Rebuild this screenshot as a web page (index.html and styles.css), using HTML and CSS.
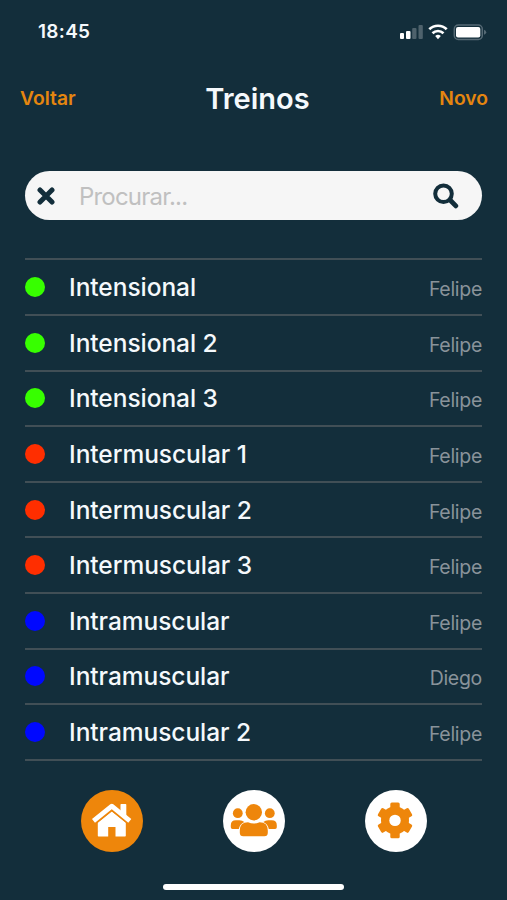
FILE: index.html
```html
<!DOCTYPE html>
<html lang="pt-BR">
<head>
    <meta charset="UTF-8">
    <meta name="viewport" content="width=device-width, initial-scale=1.0">
    <title>Treinos</title>
    <link rel="stylesheet" href="styles.css">
</head>
<body>

    <div class="status">
        <span class="time">18:45</span>
        <svg class="status-icons" width="88" height="20" viewBox="0 0 88 20">
            <g fill="#fff">
                <rect x="1" y="12" width="4" height="6" rx="1"/>
                <rect x="7" y="10" width="4.500" height="8" rx="1"/>
                <rect x="13.200" y="7" width="4.300" height="11" rx="1" opacity=".25"/>
                <rect x="19.500" y="4" width="4.300" height="14" rx="1" opacity=".25"/>
            </g>
            <g fill="none" stroke="#fff" stroke-width="2.700">
                <path d="M30.300 8.300a12.400 12.400 0 0 1 17.400 0"/>
                <path d="M33.500 12.200a8 8 0 0 1 11 0"/>
            </g>
            <path d="M36.200 15a4.200 4.200 0 0 1 5.600 0L39 18.200z" fill="#fff"/>
            <rect x="55.300" y="4" width="28" height="14.500" rx="4" fill="none" stroke="#566a75" stroke-width="1.500"/>
            <rect x="57" y="6" width="24.300" height="10.500" rx="2" fill="#fff"/>
            <path d="M85 8.700q2.200.7 2.200 2.500t-2.200 2.500z" fill="#566a75"/>
        </svg>
    </div>

    <header>
        <a href="#">Voltar</a>
        <h1>Treinos</h1>
        <a href="#">Novo</a>
    </header>

    <main>
        <form class="search">
            <svg width="18" height="18" viewBox="0 0 18 18">
                <path d="M3 3l12 12M15 3L3 15" stroke="#132e3b" stroke-width="5" stroke-linecap="round"/>
            </svg>
            <input type="text" placeholder="Procurar...">
            <svg width="26" height="26" viewBox="0 0 26 26" fill="none" stroke="#132e3b">
                <circle cx="10.500" cy="10.700" r="8.300" stroke-width="4"/>
                <path d="M17.300 17.300l5.500 5.600" stroke-width="4.800" stroke-linecap="round"/>
            </svg>
        </form>

        <ul class="list">
            <li><span class="dot green"></span><span class="name">Intensional</span><span class="owner">Felipe</span></li>
            <li><span class="dot green"></span><span class="name">Intensional 2</span><span class="owner">Felipe</span></li>
            <li><span class="dot green"></span><span class="name">Intensional 3</span><span class="owner">Felipe</span></li>
            <li><span class="dot red"></span><span class="name">Intermuscular 1</span><span class="owner">Felipe</span></li>
            <li><span class="dot red"></span><span class="name">Intermuscular 2</span><span class="owner">Felipe</span></li>
            <li><span class="dot red"></span><span class="name">Intermuscular 3</span><span class="owner">Felipe</span></li>
            <li><span class="dot blue"></span><span class="name">Intramuscular</span><span class="owner">Felipe</span></li>
            <li><span class="dot blue"></span><span class="name">Intramuscular</span><span class="owner">Diego</span></li>
            <li><span class="dot blue"></span><span class="name">Intramuscular 2</span><span class="owner">Felipe</span></li>
        </ul>
    </main>

    <nav>
        <a href="#" class="active">
            <svg viewBox="0 0 62 62">
                <path d="M16.800 45.700V32.500l14-11.200 14 11.200v13.200q0 .7-.7.700H34.500V37h-7.300v9.400h-9.700q-.7 0-.7-.7z" fill="#fff"/>
                <path d="M39.500 14.700q0-.7.700-.7h4.400q.7 0 .7.700v12l-5.800-5z" fill="#fff"/>
                <path d="M13.500 34.200l17.300-14 17.300 14" fill="none" stroke="#ee860b" stroke-width="1.800"/>
                <path d="M12.500 30.800l18.300-14.600 18 14.600" fill="none" stroke="#fff" stroke-width="4.800" stroke-linejoin="round"/>
            </svg>
        </a>
        <a href="#">
            <svg viewBox="0 0 62 62" fill="#ee860b">
                <circle cx="14.800" cy="23.200" r="4.900"/>
                <circle cx="46.800" cy="23.200" r="4.900"/>
                <path d="M7.800 37.200v-2q0-5 5-5h3.500q3 0 5 1.800-4.500 2-5.500 7H9.500q-1.700 0-1.700-1.800z"/>
                <path d="M53.800 37.200v-2q0-5-5-5h-3.500q-3 0-5 1.800 4.500 2 5.500 7h6.300q1.700 0 1.700-1.800z"/>
                <circle cx="30.800" cy="22.300" r="8.200"/>
                <path d="M25 32.200q5.800 2.500 11.600 0 8.200 0 8.200 8.300v2.300q0 3.500-3.500 3.500H20.300q-3.500 0-3.500-3.500v-2.300q0-8.300 8.200-8.300z"/>
            </svg>
        </a>
        <a href="#">
            <svg viewBox="0 0 62 62">
                <g fill="#ee860b">
                    <circle cx="30" cy="30.400" r="14"/>
                    <rect x="25.300" y="12.600" width="9.400" height="35.600" rx="1.500"/>
                    <rect x="25.300" y="12.600" width="9.400" height="35.600" rx="1.500" transform="rotate(60 30 30.400)"/>
                    <rect x="25.300" y="12.600" width="9.400" height="35.600" rx="1.500" transform="rotate(120 30 30.400)"/>
                </g>
                <circle cx="30" cy="30.400" r="5.700" fill="#fff"/>
            </svg>
        </a>
    </nav>

    <div class="home-bar"></div>

</body>
</html>
```

FILE: styles.css
```css
* {
    box-sizing: border-box;
}

body {
    font-family: 'Inter', sans-serif;
    margin: 0;
    height: 900px;
    overflow: hidden;
    display: flex;
    flex-direction: column;
    background-color: #132e3b;
    color: #f5f9fc;
}

.status {
    display: flex;
    justify-content: space-between;
    align-items: center;
    height: 62px;
    padding: 0 20px 0 38px;
}

.time {
    font-size: 19px;
    font-weight: 600;
    letter-spacing: 0.3px;
}

.status-icons {
    margin-top: -1px;
}

header {
    display: flex;
    justify-content: space-between;
    align-items: center;
    height: 72px;
    padding: 0 19px 0 20px;
}

header a {
    color: #e5860f;
    font-size: 19.300px;
    font-weight: 600;
    text-decoration: none;
}

h1 {
    margin: 0;
    font-size: 29px;
    font-weight: 600;
}

main {
    padding: 37px 25px 0;
}

.search {
    display: flex;
    align-items: center;
    height: 49px;
    padding: 0 23px 0 12px;
    border-radius: 25px;
    background-color: #f6f6f6;
}

.search input {
    flex: 1;
    min-width: 0;
    margin-left: 24px;
    padding: 2px 0 0;
    border: none;
    outline: none;
    background: none;
    font-family: inherit;
    font-size: 24px;
    letter-spacing: -0.8px;
}

.search input::placeholder {
    color: #c0c0c0;
}

.list {
    list-style: none;
    margin: 38.400px 0 0;
    padding: 0;
    border-top: 2px solid #414f56;
}

.list li {
    display: flex;
    align-items: center;
    height: 55.600px;
    border-bottom: 2px solid #414f56;
}

.dot {
    width: 20px;
    height: 20px;
    border-radius: 50%;
}

.green {
    background-color: #37ff00;
}

.red {
    background-color: #ff2e00;
}

.blue {
    background-color: #0008ff;
}

.name {
    flex: 1;
    margin-left: 24px;
    font-size: 24.500px;
    font-weight: 500;
    letter-spacing: -0.050px;
}

.owner {
    margin-top: 4px;
    font-size: 19.500px;
    letter-spacing: -0.300px;
    color: #89939a;
}

nav {
    display: flex;
    gap: 80px;
    margin: 29px 0 0 81px;
}

nav a {
    width: 62px;
    height: 62px;
    border-radius: 50%;
    background-color: #fff;
}

nav .active {
    background-color: #ee860b;
}

nav svg {
    display: block;
}

.home-bar {
    width: 181px;
    height: 6.500px;
    margin: 32px auto 0;
    border-radius: 4px;
    background-color: #fff;
}
```
